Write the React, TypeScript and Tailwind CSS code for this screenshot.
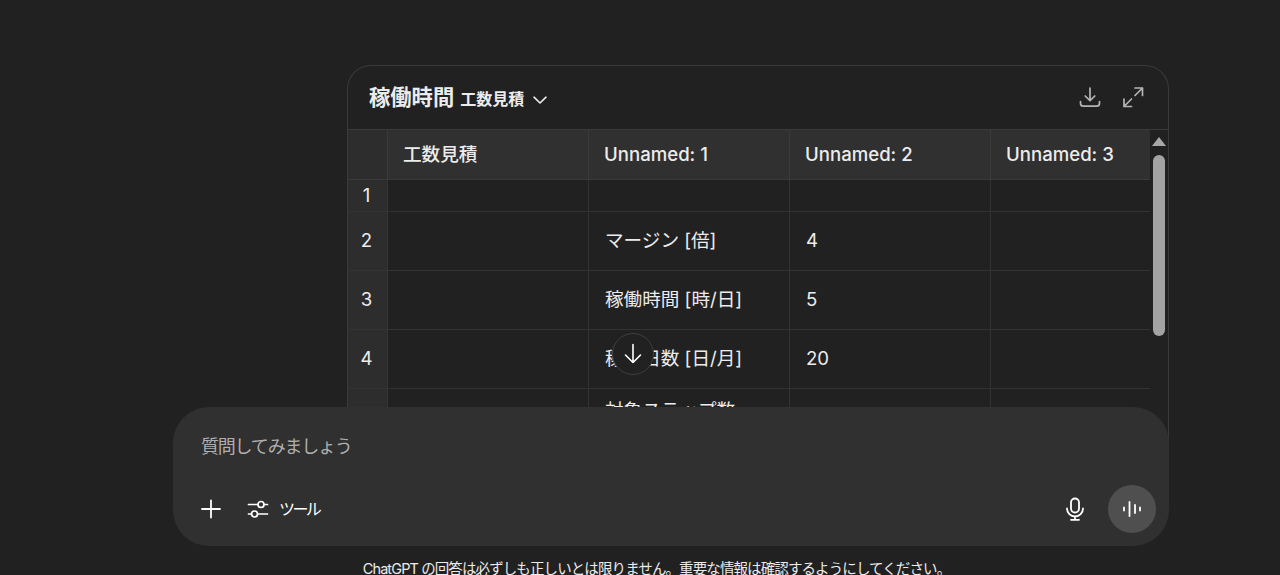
const fontStack = "font-['Inter','Noto_Sans_CJK_JP',sans-serif]";

const columns = ["工数見積", "Unnamed: 1", "Unnamed: 2", "Unnamed: 3"];

const rows = [
  { id: 1, label: "", value: "", height: "h-[32px]", align: "items-center" },
  { id: 2, label: "マージン [倍]", value: "4", height: "h-[59px]", align: "items-center pb-[1px]" },
  { id: 3, label: "稼働時間 [時/日]", value: "5", height: "h-[59px]", align: "items-center pb-[1px]" },
  { id: 4, label: "稼働日数 [日/月]", value: "20", height: "h-[59px]", align: "items-center pb-[1px]" },
  { id: 5, label: "対象ステップ数", value: "", height: "h-[59px]", align: "items-start pt-[8px]" },
];

const gridCols = "grid grid-cols-[40px_201px_201px_201px_159px]";

function Row({ id, label, value, height, align }: (typeof rows)[number]) {
  return (
    <div className={`${gridCols} ${height} border-b border-[#333333]`}>
      <div className="flex items-center justify-center bg-[#2d2d2d] border-r border-[#333333] pr-[2px] text-[#ececec]">
        {id}
      </div>
      <div className="border-r border-[#333333]" />
      <div className={`flex ${align} border-r border-[#333333] pl-4 text-[#ececec]`}>{label}</div>
      <div className={`flex ${align} border-r border-[#333333] pl-4 text-[#ececec]`}>{value}</div>
      <div />
    </div>
  );
}

function TableCard() {
  return (
    <div className="ml-[347px] w-[822px] h-[500px] rounded-t-[24px] border border-[#3a3a3a] border-b-0 bg-[#212121] overflow-hidden">
      <div className="h-[64px] flex items-center justify-between pl-[21px] pr-[24px] border-b border-[#3a3a3a]">
        <div className="flex items-center text-[#ececec] font-semibold">
          <span className="text-[21.300px]">稼働時間</span>
          <span className="ml-[6px] mt-[3px] text-[16px]">工数見積</span>
          <svg className="ml-[8px] mt-[4px]" width="16" height="16" viewBox="0 0 16 16" fill="none" stroke="currentColor" strokeWidth="1.600" strokeLinecap="round" strokeLinejoin="round">
            <path d="M2 5.200 8 11l6-5.800" />
          </svg>
        </div>
        <div className="flex items-center gap-[21px] text-[#b4b4b4] -mt-[2px]">
          <svg width="22" height="22" viewBox="0 0 22 22" fill="none" stroke="currentColor" strokeWidth="1.700" strokeLinecap="round" strokeLinejoin="round">
            <path d="M11 2v12.500M6.200 10 11 14.700 15.800 10" />
            <path d="M1.500 15.500v1.700a3 3 0 0 0 3 3h13a3 3 0 0 0 3-3v-1.700" />
          </svg>
          <svg width="22" height="22" viewBox="0 0 22 22" fill="none" stroke="currentColor" strokeWidth="1.700" strokeLinecap="round" strokeLinejoin="round">
            <path d="M13 2h7.500v7.500M20.500 2l-7.500 7.500M9.500 20.500H2V13M2 20.500 9.500 13" />
          </svg>
        </div>
      </div>
      <div className="flex">
        <div className="w-[802px] text-[18.600px]">
          <div className={`${gridCols} h-[50px] bg-[#303030] border-b border-[#3a3a3a]`}>
            <div className="bg-[#2d2d2d] border-r border-[#3a3a3a]" />
            {columns.map((column) => (
              <div key={column} className="flex items-center pl-[15px] border-r border-[#3a3a3a] last:border-r-0 font-medium text-[#ececec]">
                {column}
              </div>
            ))}
          </div>
          {rows.map((row) => (
            <Row key={row.id} {...row} />
          ))}
        </div>
        <div className="w-[18px] flex flex-col items-center pt-[7px]">
          <div className="w-0 h-0 border-x-[7px] border-x-transparent border-b-[9px] border-b-[#a8a8a8]" />
          <div className="mt-[9px] w-[12px] h-[181px] rounded-full bg-[#a3a3a3]" />
        </div>
      </div>
    </div>
  );
}

function Composer() {
  return (
    <div className="relative ml-[173px] w-[996px] h-[139px] rounded-[36px] bg-[#303030] flex flex-col justify-between pl-[28px] pr-[13px] pt-[26px] pb-[13px]">
      <div className="text-[18px] leading-[27px] tracking-[-1.200px] text-[#afafaf]">質問してみましょう</div>
      <div className="flex items-center justify-between">
        <div className="flex items-center text-white">
          <svg width="20" height="20" viewBox="0 0 20 20" fill="none" stroke="currentColor" strokeWidth="1.800" strokeLinecap="round">
            <path d="M10 1.500v17M1 10h18" />
          </svg>
          <svg className="ml-[26px]" width="22" height="22" viewBox="0 0 22 22" fill="none" stroke="currentColor" strokeWidth="1.700" strokeLinecap="round">
            <path d="M1.500 6.500h9.500M17 6.500h3.500M1.500 16h3M11 16h9.500" />
            <circle cx="14" cy="6.500" r="3" />
            <circle cx="7.500" cy="16" r="3" />
          </svg>
          <span className="ml-[10px] text-[16px] tracking-[-2.600px]">ツール</span>
        </div>
        <div className="flex items-center gap-[22px]">
          <svg className="text-white" width="22" height="24" viewBox="0 0 22 24" fill="none" stroke="currentColor" strokeWidth="1.800" strokeLinecap="round">
            <rect x="7" y="1.500" width="8" height="14" rx="4" />
            <path d="M3 11.500a8 8 0 0 0 16 0M11 19.500v3M7 22.800h8" />
          </svg>
          <div className="w-[48px] h-[48px] rounded-full bg-[#4f4f4f] flex items-center justify-center">
            <svg className="text-white" width="20" height="16" viewBox="0 0 20 16" fill="none" stroke="currentColor" strokeWidth="1.800" strokeLinecap="round">
              <path d="M2 6.500v3M7.500 1v14M13 4v8M18 6.500v3" />
            </svg>
          </div>
        </div>
      </div>
    </div>
  );
}

export default function App() {
  return (
    <div className={`h-[575px] overflow-hidden bg-[#212121] ${fontStack}`}>
      <div className="relative h-[447px] pt-[65px] overflow-hidden">
        <TableCard />
        <button className="absolute left-[612px] top-[333px] w-[42px] h-[42px] rounded-full border border-[#3f3f3f] bg-[#212121] flex items-center justify-center text-white">
          <svg width="20" height="24" viewBox="0 0 20 24" fill="none" stroke="currentColor" strokeWidth="1.600" strokeLinecap="round" strokeLinejoin="round">
            <path d="M10 2.500v18M2.500 13l7.500 7.500 7.500-7.500" />
          </svg>
        </button>
      </div>
      <div className="-mt-[40px]">
        <Composer />
      </div>
      <p className="mt-[12px] ml-[173px] w-[967px] text-center text-[14.500px] leading-[22px] tracking-[-0.900px] text-[#ececec]">
        ChatGPT の回答は必ずしも正しいとは限りません。重要な情報は確認するようにしてください。
      </p>
    </div>
  );
}
